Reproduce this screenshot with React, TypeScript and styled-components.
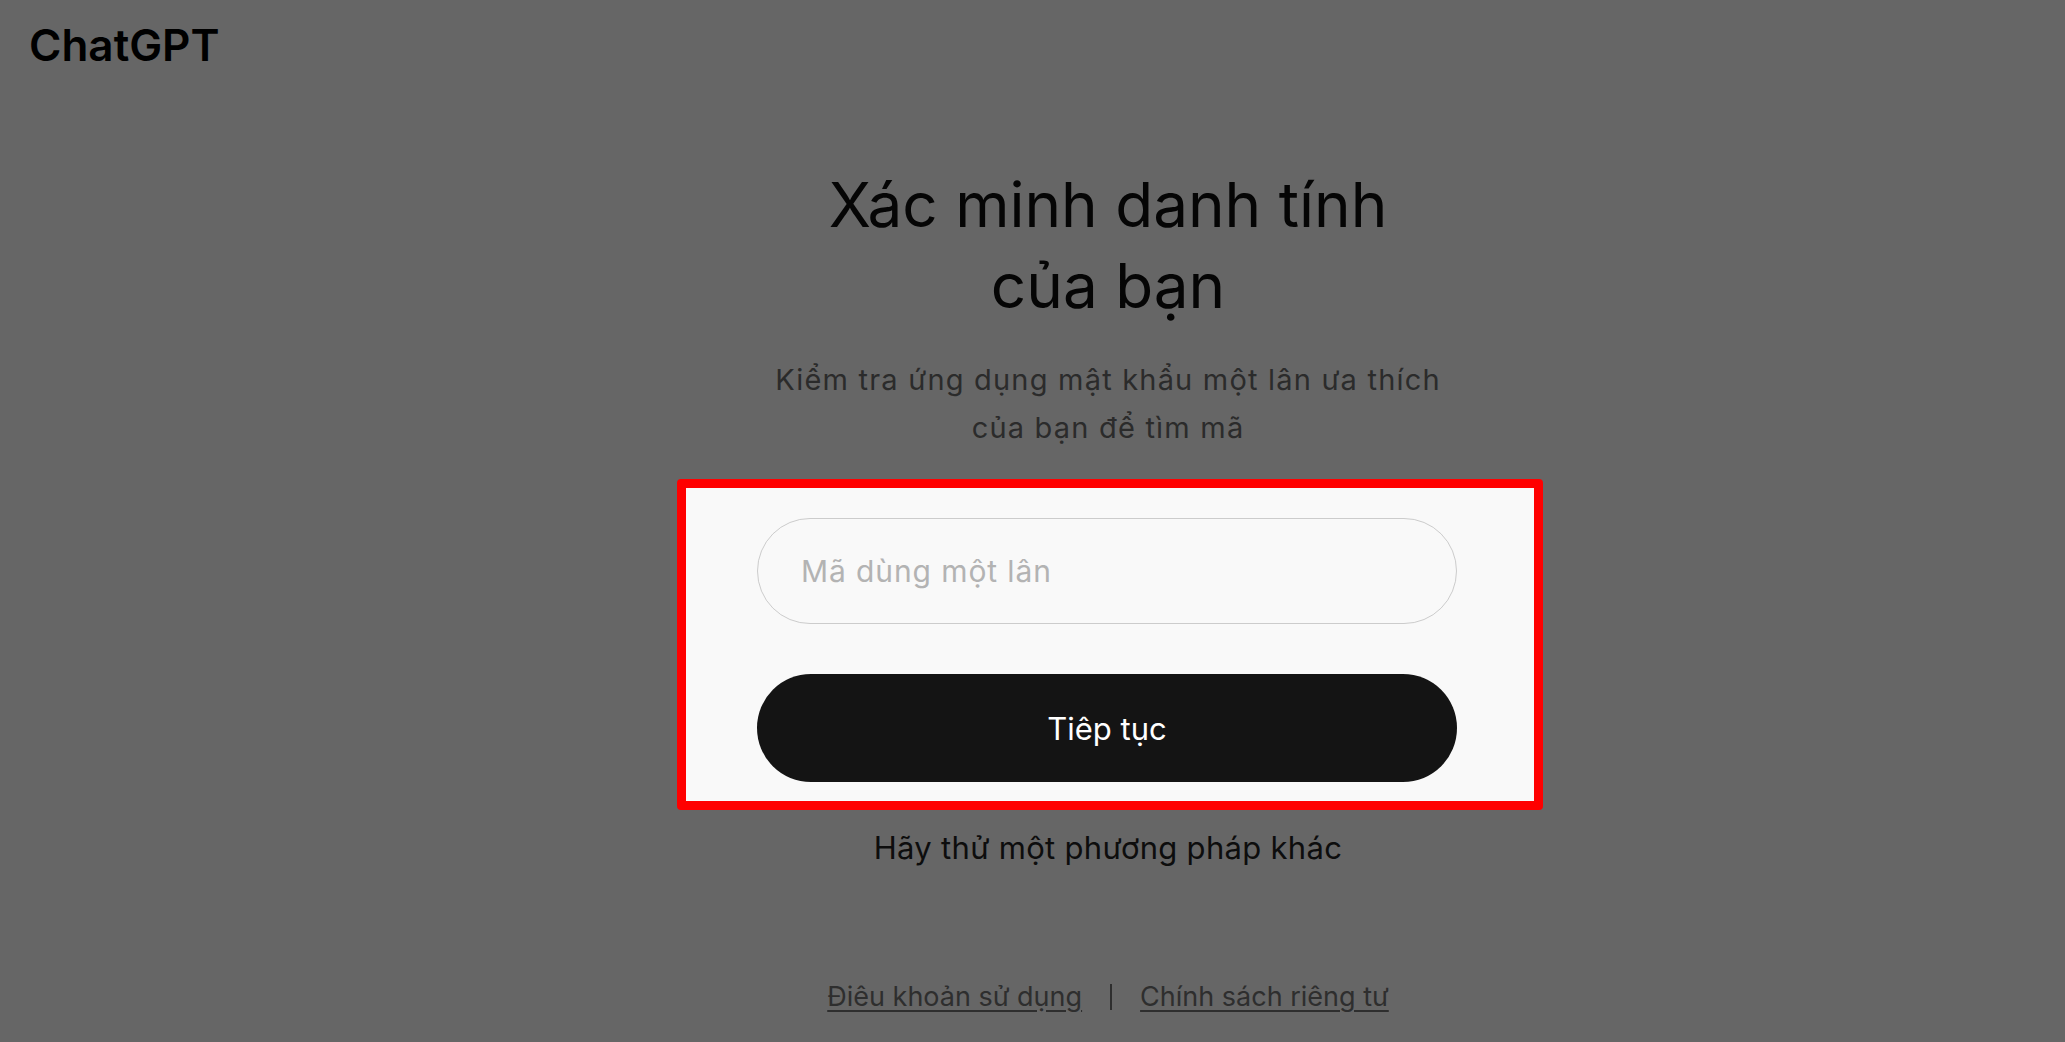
import React from "react"
import styled, { createGlobalStyle } from "styled-components"

const GlobalStyle = createGlobalStyle`
  html, body {
    margin: 0;
    padding: 0;
    background: #666666;
  }
  body {
    font-family: Inter, "Noto Sans", "Liberation Sans", sans-serif;
  }
`

const Header = () => (
  <HeaderBar>
    <Logo>ChatGPT</Logo>
  </HeaderBar>
)

const VerifyForm = () => (
  <FormBox onSubmit={(e) => e.preventDefault()}>
    <CodeInput type="text" placeholder="Mã dùng một lân" />
    <ContinueButton type="submit">Tiêp tục</ContinueButton>
  </FormBox>
)

const Footer = () => (
  <FooterRow>
    <FooterLink href="#">Điêu khoản sử dụng</FooterLink>
    <Separator />
    <FooterLink href="#">Chính sách riêng tư</FooterLink>
  </FooterRow>
)

const App = () => {
  return (
    <Page>
      <GlobalStyle />
      <Header />
      <Main>
        <Title>Xác minh danh tính của bạn</Title>
        <Subtitle>Kiểm tra ứng dụng mật khẩu một lân ưa thích của bạn để tìm mã</Subtitle>
        <VerifyForm />
        <AltMethod href="#">Hãy thử một phương pháp khác</AltMethod>
        <Footer />
      </Main>
    </Page>
  )
}

const Page = styled.div`
  min-height: 1042px;
  background: #666666;
  display: flex;
  flex-direction: column;
`

const HeaderBar = styled.header`
  padding: 23px 29px 0;
`

const Logo = styled.div`
  font-size: 44px;
  font-weight: 600;
  line-height: 44px;
  letter-spacing: 0;
  color: #000;
`

const Main = styled.main`
  display: flex;
  flex-direction: column;
  align-items: center;
  padding-left: 151px;
  padding-top: 97px;
`

const Title = styled.h1`
  margin: 0;
  max-width: 600px;
  font-size: 62px;
  font-weight: 400;
  line-height: 81px;
  text-align: center;
  color: #050505;
`

const Subtitle = styled.p`
  margin: 30px 0 0;
  max-width: 700px;
  font-size: 29px;
  letter-spacing: 1.2px;
  line-height: 48px;
  text-align: center;
  color: #2b2b2b;
`

const FormBox = styled.form`
  margin: 27px 0 0 4px;
  width: 866px;
  box-sizing: border-box;
  border: 9px solid #ff0000;
  border-radius: 4px;
  background: #f9f9f9;
  padding: 30px 77px 19px 71px;
  display: flex;
  flex-direction: column;
  gap: 50px;
`

const CodeInput = styled.input`
  height: 106px;
  box-sizing: border-box;
  border: 1.5px solid #cccccc;
  border-radius: 53px;
  background: transparent;
  padding: 0 43px;
  font-family: inherit;
  font-size: 30px;
  letter-spacing: 0.9px;
  color: #0d0d0d;
  outline: none;

  &::placeholder {
    color: #b3b3b3;
  }
`

const ContinueButton = styled.button`
  height: 108px;
  border: none;
  border-radius: 54px;
  background: #141414;
  color: #fff;
  font-family: inherit;
  font-size: 31px;
  cursor: pointer;
`

const AltMethod = styled.a`
  margin-top: 18px;
  font-size: 31px;
  letter-spacing: 0.3px;
  line-height: 40px;
  color: #0d0d0d;
  text-decoration: none;
`

const FooterRow = styled.footer`
  margin-top: 111px;
  display: flex;
  align-items: center;
  gap: 28px;
`

const FooterLink = styled.a`
  font-size: 27px;
  line-height: 36px;
  color: #2e2e2e;
  text-decoration: underline;
  text-underline-offset: 4px;
`

const Separator = styled.span`
  width: 2px;
  height: 26px;
  background: #2e2e2e;
`

export default App
